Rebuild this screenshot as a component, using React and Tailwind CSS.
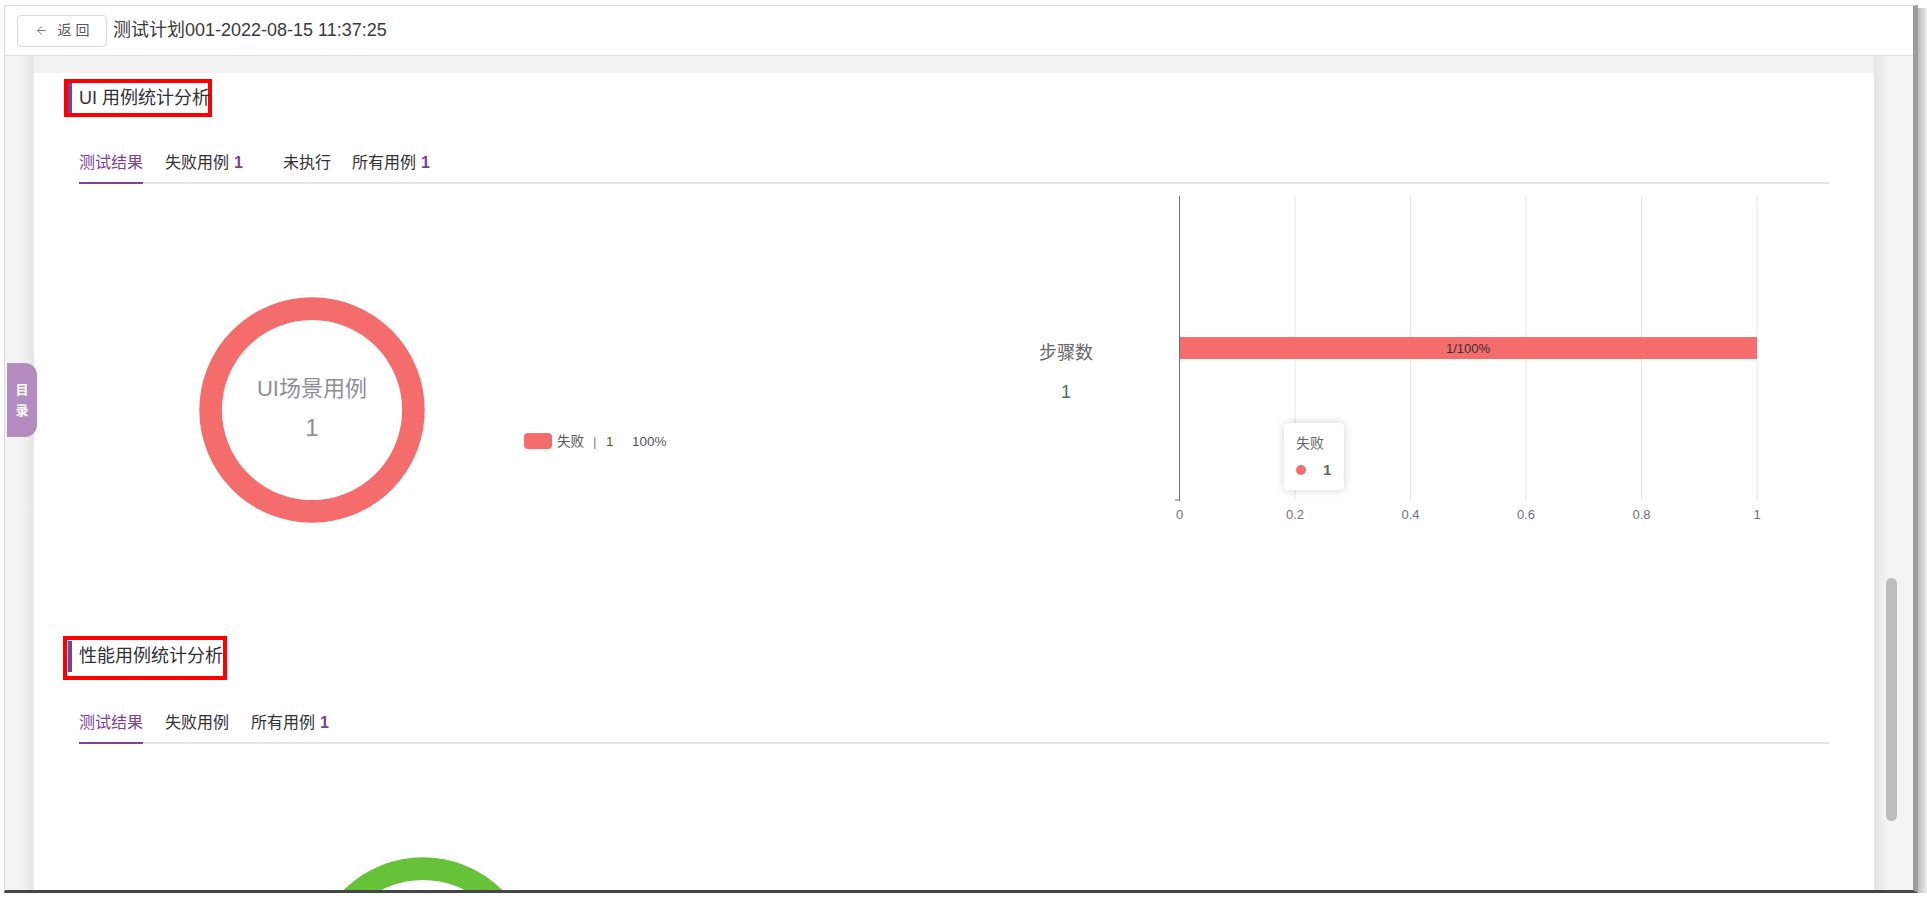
import React from "react";
import { ArrowLeft } from "lucide-react";

function Tabs({ items }) {
  return (
    <div className="flex h-[40px] border-b-2 border-[#e4e7ed]">
      {items.map((t, i) => (
        <div
          key={i}
          className={
            "h-[40px] flex items-center border-b-2 text-[16px] whitespace-nowrap " +
            (t.active ? "border-[#7d3f98] text-[#7d3f98] " : "border-transparent text-[#303133] ") +
            (t.ml || "")
          }
        >
          <span>{t.label}</span>
          {t.count != null && (
            <span className="ml-[5px] font-bold text-[#7d3f98]">{t.count}</span>
          )}
        </div>
      ))}
    </div>
  );
}

function PieChart({ color, cx, showText, showLegend }) {
  return (
    <svg width="874" height="452" className="shrink-0">
      <circle cx={cx} cy="226" r="101.4" fill="none" stroke={color} strokeWidth="22.6" />
      {showText && (
        <>
          <text x={cx} y="204" textAnchor="middle" dominantBaseline="central" fontSize="22" fill="#8e9096">
            UI场景用例
          </text>
          <text x={cx} y="243" textAnchor="middle" dominantBaseline="central" fontSize="24" fill="#8e9096">
            1
          </text>
        </>
      )}
      {showLegend && (
        <>
          <rect x="445" y="249" width="28" height="16" rx="4" fill="#f56c6c" />
          <text x="478" y="257.5" dominantBaseline="central" fontSize="13.5" fill="#555">失败</text>
          <text x="514" y="257.5" dominantBaseline="central" fontSize="13.5" fill="#888">|</text>
          <text x="527" y="257.5" dominantBaseline="central" fontSize="13.5" fill="#555">1</text>
          <text x="553" y="257.5" dominantBaseline="central" fontSize="13.5" fill="#555">100%</text>
        </>
      )}
    </svg>
  );
}

function BarChart() {
  const ticks = [226.5, 342, 457.5, 573, 688.5, 804];
  const labels = ["0", "0.2", "0.4", "0.6", "0.8", "1"];
  return (
    <div className="relative w-[875px] h-[452px] shrink-0">
      <svg width="875" height="452">
        {ticks.slice(1).map((x, i) => (
          <line key={i} x1={x} y1="12" x2={x} y2="316" stroke="#e0e6f1" strokeWidth="1" />
        ))}
        <rect x="226.5" y="153" width="577.5" height="22" fill="#f56c6c" />
        <line x1="226.5" y1="12" x2="226.5" y2="316.5" stroke="#6e7079" strokeWidth="1" />
        <line x1="222" y1="316" x2="227" y2="316" stroke="#6e7079" strokeWidth="1" />
        <text x="515" y="164" textAnchor="middle" dominantBaseline="central" fontSize="13" fill="#333">
          1/100%
        </text>
        {ticks.map((x, i) => (
          <text key={i} x={x} y="330" textAnchor="middle" dominantBaseline="central" fontSize="13" fill="#6e7079">
            {labels[i]}
          </text>
        ))}
        <text x="113" y="169" textAnchor="middle" dominantBaseline="central" fontSize="18" fill="#666">
          步骤数
        </text>
        <text x="113" y="208" textAnchor="middle" dominantBaseline="central" fontSize="18" fill="#666">
          1
        </text>
      </svg>
      <div className="absolute left-[331px] top-[239px] w-[60px] h-[67px] bg-white rounded-[4px] shadow-[0_0_10px_rgba(0,0,0,0.18)] pl-[12px] pt-[10px]">
        <div className="text-[14px] leading-[20px] text-[#666]">失败</div>
        <div className="mt-[7px] flex items-center h-[20px]">
          <span className="w-[10px] h-[10px] rounded-full bg-[#f56c6c]" />
          <span className="ml-[17px] text-[15px] font-bold text-[#666]">1</span>
        </div>
      </div>
    </div>
  );
}

export default function App() {
  return (
    <div className="w-[1927px] h-[900px] bg-white overflow-hidden flex font-['Liberation_Sans','Noto_Sans_CJK_SC',sans-serif]">
      <div className="pt-[5px] pl-[4px] shrink-0">
        <div className="w-[1914px] h-[888px] border-l border-t border-[#d8d8d8] border-r-[5px] border-r-[#9c9c9c] border-b-[3px] border-b-[#474747] flex flex-col">
          {/* header */}
          <div className="h-[50px] shrink-0 bg-white border-b border-[#e0e0e0] flex items-center pl-[12px]">
            <div className="w-[90px] h-[32px] border border-[#d9d9d9] rounded-[4px] flex items-center justify-center text-[14px] text-[#595959]">
              <ArrowLeft size={13} strokeWidth={1.5} className="mr-[10px]" />
              <span>返 回</span>
            </div>
            <div className="ml-[6px] text-[18px] text-[#3a3a3a]">测试计划001-2022-08-15 11:37:25</div>
          </div>
          {/* body */}
          <div className="flex-1 flex bg-[#f2f2f2] overflow-hidden relative">
            <div className="w-[29px] shrink-0 bg-[linear-gradient(to_right,#f4f4f4_55%,#e6e6e6)]" />
            <div className="w-[1840px] shrink-0 self-start bg-white mt-[17px] px-[45px] pt-[6px] pb-[40px]">
              {/* section 1 */}
              <div className="-ml-[15px] w-[148px] h-[38px] border-4 border-[#ff0000]">
                <div className="h-[30px] flex items-center border-l-4 border-[#7d3f98] pl-[7px] text-[18px] text-[#303133] whitespace-nowrap">
                  UI 用例统计分析
                </div>
              </div>
              <div className="mt-[27px]">
                <Tabs
                  items={[
                    { label: "测试结果", active: true },
                    { label: "失败用例", count: 1, ml: "ml-[22px]" },
                    { label: "未执行", ml: "ml-[40px]" },
                    { label: "所有用例", count: 1, ml: "ml-[21px]" },
                  ]}
                />
              </div>
              <div className="flex h-[452px]">
                <PieChart color="#f56c6c" cx={233} showText showLegend />
                <BarChart />
              </div>
              {/* section 2 */}
              <div className="-ml-[16px] w-[164px] h-[44px] border-4 border-[#ff0000] pt-[1px] pl-[1px]">
                <div className="flex items-center">
                  <div className="w-[4px] h-[31px] bg-[#7d3f98]" />
                  <div className="ml-[7px] text-[18px] leading-[31px] text-[#303133] whitespace-nowrap">性能用例统计分析</div>
                </div>
              </div>
              <div className="mt-[24px]">
                <Tabs
                  items={[
                    { label: "测试结果", active: true },
                    { label: "失败用例", ml: "ml-[22px]" },
                    { label: "所有用例", count: 1, ml: "ml-[22px]" },
                  ]}
                />
              </div>
              <div className="flex h-[452px]">
                <PieChart color="#67c23a" cx={344} />
              </div>
            </div>
            <div className="w-[39px] shrink-0 bg-[linear-gradient(to_right,#e4e4e4,#f3f3f3_12px,#f3f3f3)] pt-[522px] pl-[12px]">
              <div className="w-[11px] h-[243px] rounded-full bg-[#bdbdbd]" />
            </div>
            {/* 目录 tab */}
            <div className="absolute left-[2px] top-[307px] w-[30px] h-[74px] rounded-r-[12px] bg-[#b48cc0] flex flex-col items-center justify-center text-white text-[13px] font-bold leading-[21px]">
              <span>目</span>
              <span>录</span>
            </div>
          </div>
        </div>
      </div>
      <div className="mt-[8px] w-[9px] h-[885px] bg-[linear-gradient(to_right,#bcbcbc,#ededed)]" />
    </div>
  );
}
